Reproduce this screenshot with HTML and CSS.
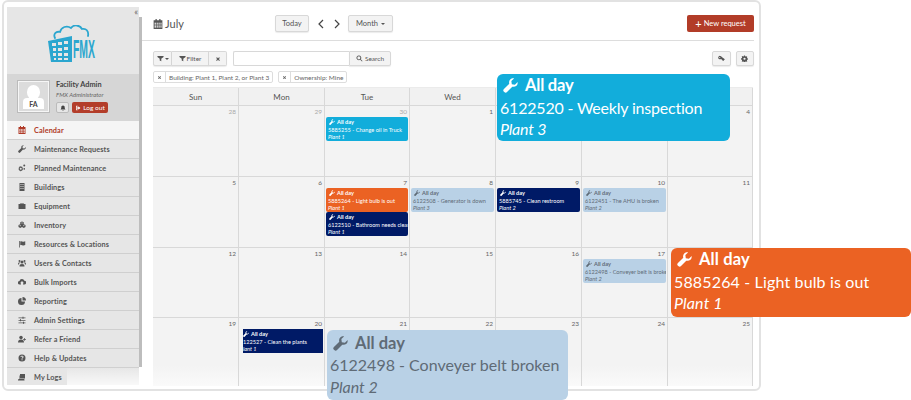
FILE: index.html
```html
<!DOCTYPE html>
<html lang="en">
<head>
<meta charset="utf-8">
<title>Calendar</title>
<link rel="stylesheet" href="styles.css">
</head>
<body>
<svg class="defs" width="0" height="0" aria-hidden="true">
  <symbol id="wrench" viewBox="0 0 16 16"><path d="M15.600 4.200c.2 1.500-.2 3-1.300 4-1.200 1.200-2.900 1.500-4.400 1L4.300 15a2 2 0 0 1-2.900 0l-.4-.4a2 2 0 0 1 0-2.900l5.700-5.600c-.5-1.500-.2-3.200 1-4.400C8.800.6 10.300.2 11.800.4L8.900 3.300l.5 3.300 3.300.5z" fill="currentColor"/></symbol>
  <symbol id="cal" viewBox="0 0 16 16"><path d="M4 0h2v2h4V0h2v2h3v14H1V2h3zM2.500 6v1.700h2.300V6zm3.300 0v1.700h2V6zm3 0v1.700h2V6zm3 0v1.700h2V6zm-9.300 2.700v1.800h2.300V8.700zm3.300 0v1.800h2V8.700zm3 0v1.800h2V8.700zm3 0v1.800h2V8.700zm-9.300 2.800v2h2.300v-2zm3.300 0v2h2v-2zm3 0v2h2v-2zm3 0v2h2v-2z" fill="currentColor" fill-rule="evenodd"/></symbol>
  <symbol id="gears" viewBox="0 0 16 16"><path d="M5.500 4l1 1.500 1.700-.3.500 1.800 1.300.8-.8 1.600.8 1.600-1.300.8-.5 1.800-1.700-.3-1 1.500-1-1.500-1.700.3-.5-1.800L1 11l.8-1.600L1 7.800l1.300-.8.500-1.800 1.700.3zm0 3.500a2 2 0 1 0 0 4 2 2 0 0 0 0-4zM12.500 1a2 2 0 1 1 0 4 2 2 0 0 1 0-4zm0 7a1.700 1.700 0 1 1 0 3.400 1.700 1.700 0 0 1 0-3.400z" fill="currentColor" fill-rule="evenodd"/></symbol>
  <symbol id="building" viewBox="0 0 16 16"><path d="M3 0h10v16H3zm2 2v2h2V2zm4 0v2h2V2zM5 6v2h2V6zm4 0v2h2V6zm-4 4v2h2v-2zm4 0v2h2v-2z" fill="currentColor" fill-rule="evenodd"/></symbol>
  <symbol id="brief" viewBox="0 0 16 16"><path d="M5 2h6v2h4v10H1V4h4zm1.300 1.200V4h3.400v-.8z" fill="currentColor" fill-rule="evenodd"/></symbol>
  <symbol id="cubes" viewBox="0 0 16 16"><path d="M8 1l3.500 1.700v3.600L15 8v4l-3.500 2L8 12.200 4.500 14 1 12V8l3.500-1.700V2.700zM8 3L6 4l2 1 2-1zM4.500 8.700l-2 1 2 1 2-1zm7 0l-2 1 2 1 2-1z" fill="currentColor" fill-rule="evenodd"/></symbol>
  <symbol id="flag" viewBox="0 0 16 16"><path d="M2 2h1.500v13H2zM4.500 3c2-1 3.500 0 5.500.300 1.500.2 3 0 4.500-.8v7.500c-1.500.8-3 1-4.500.8-2-.3-3.500-1.300-5.500-.3z" fill="currentColor"/></symbol>
  <symbol id="users" viewBox="0 0 16 16"><circle cx="8" cy="6" r="3" fill="currentColor"/><circle cx="3" cy="4" r="2" fill="currentColor"/><circle cx="13" cy="4" r="2" fill="currentColor"/><path d="M3 15c0-3.500 1.500-5 5-5s5 1.500 5 5zM0 11c0-3 1-4.500 3-4.500l1 1c-1 .7-2 2-2 3.500zm16 0c0-3-1-4.500-3-4.500l-1 1c1 .7 2 2 2 3.500z" fill="currentColor"/></symbol>
  <symbol id="cloudup" viewBox="0 0 16 16"><path d="M3.500 13A3.500 3.500 0 0 1 3 6a5 5 0 0 1 9.700-.6A3.800 3.800 0 0 1 12.500 13H10v-2.500h2L8 6l-4 4.500h2V13z" fill="currentColor"/></symbol>
  <symbol id="pie" viewBox="0 0 16 16"><path d="M7 2v7h7a7 7 0 1 1-7-7zM9 0a7 7 0 0 1 7 7H9z" fill="currentColor"/></symbol>
  <symbol id="sliders" viewBox="0 0 16 16"><path d="M1 3h14v1.300H1zm0 5h14v1.300H1zm0 5h14v1.300H1z" fill="currentColor"/><path d="M9 1.500h2v4H9zM4 6.500h2v4H4zM10 11.500h2v4h-2z" fill="currentColor"/></symbol>
  <symbol id="useradd" viewBox="0 0 16 16"><circle cx="6" cy="5" r="3.500" fill="currentColor"/><path d="M0 15c0-4 2-6 6-6s6 2 6 6zM12 6h1.500v2H16v1.500h-2.500v2H12v-2h-2V8h2z" fill="currentColor"/></symbol>
  <symbol id="help" viewBox="0 0 16 16"><path d="M8 1a7 7 0 1 1 0 14A7 7 0 0 1 8 1zm-.9 9.500v2h2v-2zM8 3.500c-1.700 0-3 1-3.100 2.700h1.900c.1-.7.500-1 1.200-1 .6 0 1 .3 1 .9 0 .5-.3.800-.9 1.200-.8.600-1 1.200-1 2.200h1.900c0-.6.100-.9.800-1.300.8-.6 1.300-1.200 1.300-2.200C11.100 4.500 9.800 3.500 8 3.500z" fill="currentColor" fill-rule="evenodd"/></symbol>
  <symbol id="logs" viewBox="0 0 16 16"><path d="M4 2h10v9H4zM2 5h1v7h9v1H2zM0 12.500h13V15H0z" fill="currentColor"/></symbol>
  <symbol id="bell" viewBox="0 0 16 16"><path d="M8 1c3 0 4.500 2 4.500 5 0 3 .8 4.500 2 6H1.500c1.200-1.500 2-3 2-6 0-3 1.500-5 4.500-5zM6.200 13h3.600a1.800 1.800 0 0 1-3.600 0z" fill="currentColor"/></symbol>
  <symbol id="logout" viewBox="0 0 16 16"><path d="M7 2H3v12h4v-2H5V4h2zM9 3.500L14.500 8 9 12.500V10H6V6h3z" fill="currentColor"/></symbol>
  <symbol id="funnel" viewBox="0 0 16 16"><path d="M1 2h14v2.300L9.800 8.500V14l-3.600-1.500v-4L1 4.300z" fill="currentColor"/></symbol>
  <symbol id="close" viewBox="0 0 16 16"><path d="M3 5l2-2 3 3 3-3 2 2-3 3 3 3-2 2-3-3-3 3-2-2 3-3z" fill="currentColor"/></symbol>
  <symbol id="search" viewBox="0 0 16 16"><path d="M6.500 1a5.500 5.500 0 0 1 4.400 8.800l4 4-1.200 1.200-4-4A5.500 5.500 0 1 1 6.500 1zm0 2a3.500 3.500 0 1 0 0 7 3.500 3.500 0 0 0 0-7z" fill="currentColor" fill-rule="evenodd"/></symbol>
  <symbol id="key" viewBox="0 0 16 16"><path d="M5 2a4 4 0 0 1 3.600 2.300L15 9v2.500h-1.500v1.500h-2.500l-3.800-4A4 4 0 1 1 5 2zM4 4.500a1.300 1.300 0 1 0 0 2.600 1.300 1.300 0 0 0 0-2.600z" fill="currentColor" fill-rule="evenodd"/></symbol>
  <symbol id="gear" viewBox="0 0 16 16"><path d="M6.800 1h2.400l.4 2 1.500.7 1.800-1.100 1.600 1.700-1.100 1.700.6 1.600 2 .4v2.400l-2 .4-.6 1.500 1.100 1.800-1.600 1.600-1.800-1.100-1.500.6-.4 2H6.800l-.4-2-1.500-.6-1.800 1.100-1.600-1.600 1.100-1.800-.7-1.500-1.900-.4V7.600l2-.4.6-1.600-1.100-1.700 1.600-1.700 1.800 1.100 1.500-.7zM8 6a2.500 2.500 0 1 0 0 5 2.500 2.500 0 0 0 0-5z" fill="currentColor" fill-rule="evenodd"/></symbol>
  <symbol id="left" viewBox="0 0 8 10"><path d="M6 1L2 5l4 4" fill="none" stroke="currentColor" stroke-width="1.200"/></symbol>
  <symbol id="right" viewBox="0 0 8 10"><path d="M2 1l4 4-4 4" fill="none" stroke="currentColor" stroke-width="1.200"/></symbol>
</svg>

<div class="frame">
  <aside class="sidebar">
    <span class="collapse">«</span>
    <div class="logo">
      <svg class="logo-mark" width="48" height="38" viewBox="0 0 48 38">
        <path d="M7 13c-2-4 1-7 5-6 1-5 7-7 11-4 3-4 9-3 11 1 4-1 7 2 6 7" fill="none" stroke="#2ba6cf" stroke-width="1.800" stroke-linecap="round"/>
        <path d="M0 16l24-5v26H3z" fill="#2ba6cf"/>
        <path d="M4 18h4v3H4zm6-1h4v3h-4zm6-1h4v3h-4zM5 23h3v3H5zm5 0h4v3h-4zm6-1h4v3h-4zM5 28h3v3H5zm5 0h4v3h-4zm6 0h4v3h-4zM6 33h2v2H6zm4 0h4v2h-4zm6 0h4v2h-4z" fill="#e6e6e6"/>
        <text class="logo-text" x="25" y="33" textLength="22" lengthAdjust="spacingAndGlyphs">FMX</text>
      </svg>
    </div>
    <div class="user">
      <div class="avatar">
        <span class="avatar-head"></span>
        <span class="avatar-body">FA</span>
      </div>
      <div class="user-info">
        <div class="user-name">Facility Admin</div>
        <div class="user-role">FMX Administrator</div>
        <div class="user-actions">
          <span class="mini-btn"><svg class="ic6"><use href="#bell"/></svg></span>
          <span class="logout"><svg class="ic6"><use href="#logout"/></svg>Log out</span>
        </div>
      </div>
    </div>
    <nav class="nav">
      <a class="nav-item active"><svg class="nav-ic"><use href="#cal"/></svg>Calendar</a>
      <a class="nav-item"><svg class="nav-ic"><use href="#wrench"/></svg>Maintenance Requests</a>
      <a class="nav-item"><svg class="nav-ic"><use href="#gears"/></svg>Planned Maintenance</a>
      <a class="nav-item"><svg class="nav-ic"><use href="#building"/></svg>Buildings</a>
      <a class="nav-item"><svg class="nav-ic"><use href="#brief"/></svg>Equipment</a>
      <a class="nav-item"><svg class="nav-ic"><use href="#cubes"/></svg>Inventory</a>
      <a class="nav-item"><svg class="nav-ic"><use href="#flag"/></svg>Resources &amp; Locations</a>
      <a class="nav-item"><svg class="nav-ic"><use href="#users"/></svg>Users &amp; Contacts</a>
      <a class="nav-item"><svg class="nav-ic"><use href="#cloudup"/></svg>Bulk Imports</a>
      <a class="nav-item"><svg class="nav-ic"><use href="#pie"/></svg>Reporting</a>
      <a class="nav-item"><svg class="nav-ic"><use href="#sliders"/></svg>Admin Settings</a>
      <a class="nav-item"><svg class="nav-ic"><use href="#useradd"/></svg>Refer a Friend</a>
      <a class="nav-item"><svg class="nav-ic"><use href="#help"/></svg>Help &amp; Updates</a>
      <a class="nav-item"><svg class="nav-ic"><use href="#logs"/></svg>My Logs</a>
    </nav>
  </aside>
  <div class="scrollbar"></div>
  <main class="main">
    <header class="topbar">
      <h1 class="title"><svg class="title-ic"><use href="#cal"/></svg>July</h1>
      <div class="nav-controls">
        <span class="btn today">Today</span>
        <span class="chev prev"><svg class="chev-ic"><use href="#left"/></svg></span>
        <span class="chev next"><svg class="chev-ic"><use href="#right"/></svg></span>
        <span class="btn month">Month <i class="caret"></i></span>
      </div>
      <span class="btn-new"><span class="plus">+</span> New request</span>
    </header>
    <div class="filters">
      <div class="btn-group">
        <span class="btn small grp-first"><svg class="ic7"><use href="#funnel"/></svg><i class="caret tiny"></i></span>
        <span class="btn small grp-mid"><svg class="ic7"><use href="#funnel"/></svg>Filter</span>
        <span class="btn small grp-last"><svg class="ic6"><use href="#close"/></svg></span>
      </div>
      <div class="search">
        <span class="search-input"></span>
        <span class="btn small search-btn"><svg class="ic7"><use href="#search"/></svg>Search</span>
      </div>
      <div class="tools">
        <span class="btn small tool"><svg class="ic7"><use href="#key"/></svg></span>
        <span class="btn small tool"><svg class="ic7"><use href="#gear"/></svg></span>
      </div>
    </div>
    <div class="chips">
      <span class="chip"><svg class="ic5"><use href="#close"/></svg><b class="chip-sep"></b>Building: Plant 1, Plant 2, or Plant 3</span>
      <span class="chip"><svg class="ic5"><use href="#close"/></svg><b class="chip-sep"></b>Ownership: Mine</span>
    </div>
    <section class="calendar">
      <div class="dow">Sun</div><div class="dow">Mon</div><div class="dow">Tue</div><div class="dow">Wed</div><div class="dow">Thu</div><div class="dow">Fri</div><div class="dow">Sat</div>

      <div class="cell"><span class="num other">28</span></div>
      <div class="cell"><span class="num other">29</span></div>
      <div class="cell"><span class="num other">30</span>
        <div class="event cyan"><div class="ev-head"><svg class="ic6"><use href="#wrench"/></svg>All day</div><div class="ev-line">5885255 - Change oil in Truck</div><div class="ev-loc">Plant 1</div></div>
      </div>
      <div class="cell"><span class="num">1</span></div>
      <div class="cell"></div>
      <div class="cell"></div>
      <div class="cell"><span class="num">4</span></div>

      <div class="cell"><span class="num">5</span></div>
      <div class="cell"><span class="num">6</span></div>
      <div class="cell"><span class="num">7</span>
        <div class="event orange"><div class="ev-head"><svg class="ic6"><use href="#wrench"/></svg>All day</div><div class="ev-line">5885264 - Light bulb is out</div><div class="ev-loc">Plant 1</div></div>
        <div class="event navy"><div class="ev-head"><svg class="ic6"><use href="#wrench"/></svg>All day</div><div class="ev-line">6122510 - Bathroom needs clear</div><div class="ev-loc">Plant 1</div></div>
      </div>
      <div class="cell"><span class="num">8</span>
        <div class="event pale"><div class="ev-head"><svg class="ic6"><use href="#wrench"/></svg>All day</div><div class="ev-line">6122508 - Generator is down</div><div class="ev-loc">Plant 3</div></div>
      </div>
      <div class="cell"><span class="num">9</span>
        <div class="event navy"><div class="ev-head"><svg class="ic6"><use href="#wrench"/></svg>All day</div><div class="ev-line">5885745 - Clean restroom</div><div class="ev-loc">Plant 2</div></div>
      </div>
      <div class="cell"><span class="num">10</span>
        <div class="event pale"><div class="ev-head"><svg class="ic6"><use href="#wrench"/></svg>All day</div><div class="ev-line">6122451 - The AHU is broken</div><div class="ev-loc">Plant 2</div></div>
      </div>
      <div class="cell"><span class="num">11</span></div>

      <div class="cell"><span class="num">12</span></div>
      <div class="cell"><span class="num">13</span></div>
      <div class="cell"><span class="num">14</span></div>
      <div class="cell"><span class="num">15</span></div>
      <div class="cell"><span class="num">16</span></div>
      <div class="cell"><span class="num">17</span>
        <div class="event pale"><div class="ev-head"><svg class="ic6"><use href="#wrench"/></svg>All day</div><div class="ev-line">6122498 - Conveyer belt is broke</div><div class="ev-loc">Plant 2</div></div>
      </div>
      <div class="cell"></div>

      <div class="cell final"><span class="num">19</span></div>
      <div class="cell final"><span class="num">20</span>
        <div class="event navy clipped"><div class="ev-head"><svg class="ic6"><use href="#wrench"/></svg>All day</div><div class="ev-line">122527 - Clean the plants</div><div class="ev-loc">lant 1</div></div>
      </div>
      <div class="cell final"><span class="num">21</span></div>
      <div class="cell final"><span class="num">22</span></div>
      <div class="cell final"><span class="num">23</span></div>
      <div class="cell final"><span class="num">24</span></div>
      <div class="cell final"><span class="num">25</span></div>
    </section>
  </main>
</div>

<div class="callout call-cyan">
  <div class="call-head"><svg class="call-ic"><use href="#wrench"/></svg>All day</div>
  <div>6122520 - Weekly inspection</div>
  <div class="call-loc">Plant 3</div>
</div>
<div class="callout call-orange">
  <div class="call-head"><svg class="call-ic"><use href="#wrench"/></svg>All day</div>
  <div>5885264 - Light bulb is out</div>
  <div class="call-loc">Plant 1</div>
</div>
<div class="callout call-pale">
  <div class="call-head"><svg class="call-ic"><use href="#wrench"/></svg>All day</div>
  <div>6122498 - Conveyer belt broken</div>
  <div class="call-loc">Plant 2</div>
</div>
</body>
</html>
```

FILE: styles.css
```css
* { box-sizing: border-box; }
html, body { margin: 0; height: 400px; overflow: hidden; background: #fff; }
body { position: relative; width: 911px; font-family: "Lato", "Noto Sans", sans-serif; color: #444; }
.defs { position: absolute; }
svg { display: inline-block; flex: none; }
.ic5 { width: 5px; height: 5px; }
.ic6 { width: 6px; height: 6px; }
.ic7 { width: 7px; height: 7px; }

.frame { display: flex; width: 759px; height: 391px; margin-left: 2px; padding: 5px 5px 4px 3px; border: 2px solid #e2e2e2; border-radius: 6px; background: #fff; overflow: hidden; }

/* Sidebar */
.sidebar { position: relative; width: 132px; flex: none; display: flex; flex-direction: column; background: #e6e6e6; overflow: hidden; }
.sidebar::after { content: ""; position: absolute; left: 60px; right: 0; bottom: 0; height: 18px; background: linear-gradient(to bottom, rgba(255,255,255,0), rgba(255,255,255,.75)); }
.collapse { position: absolute; top: 0; right: 1px; font-size: 9px; line-height: 9px; color: #666; }
.scrollbar { width: 3px; flex: none; height: 350px; margin-top: 10px; background: #bdbdbd; }
.logo { height: 67px; flex: none; display: flex; justify-content: center; padding: 18px 3px 0 0; }
.logo-text { font-family: "Liberation Sans", sans-serif; font-weight: 700; font-size: 26px; fill: #2ba6cf; }
.user { height: 47px; flex: none; display: flex; gap: 6px; padding: 6px 0 0 10px; background: #d6d6d6; }
.avatar { width: 33px; height: 33px; border: 2px solid #f6f6f6; background: #dcdcdc; display: flex; flex-direction: column; align-items: center; outline: 1px solid #bbb; outline-offset: -1px; }
.avatar-head { width: 13px; height: 14px; margin-top: 3px; border-radius: 50% 50% 45% 45%; background: #fff; }
.avatar-body { width: 21px; height: 11px; margin-top: -1px; border-radius: 4px 4px 0 0; background: #fff; font-size: 7px; font-weight: 700; line-height: 12px; text-align: center; color: #444; }
.user-info { display: flex; flex-direction: column; }
.user-name { font-size: 7.300px; line-height: 10px; font-weight: 700; color: #444; white-space: nowrap; }
.user-role { font-size: 6px; line-height: 8px; font-style: italic; color: #666; white-space: nowrap; margin-top: 1px; }
.user-actions { display: flex; gap: 3px; margin-top: 3px; }
.mini-btn { width: 13px; height: 11px; display: flex; align-items: center; justify-content: center; background: #e6e6e6; border: 1px solid #bbb; border-radius: 2px; color: #444; }
.logout { height: 11px; width: 36px; display: flex; align-items: center; justify-content: center; gap: 2px; background: #b33d2a; border-radius: 2px; color: #fff; font-size: 6.500px; }
.nav { display: flex; flex-direction: column; }
.nav-item { height: 19px; flex: none; display: flex; align-items: center; padding-left: 11px; border-bottom: 1px solid #cfcfcf; font-size: 7.300px; font-weight: 700; letter-spacing: .1px; color: #555; white-space: nowrap; }
.nav-ic { width: 8px; height: 8px; margin-right: 8px; color: #555; }
.nav-item.active { background: #f5f5f5; color: #b03a27; }
.nav-item.active .nav-ic { color: #b03a27; }

/* Main */
.main { flex: 1; min-width: 0; display: flex; flex-direction: column; }
.topbar { height: 34px; flex: none; padding: 8px 0 0 11px; display: flex; align-items: flex-start; border-bottom: 1px solid #ddd; }
.title { width: 122px; margin: 0; display: flex; align-items: center; gap: 2px; height: 17px; font-size: 11px; font-weight: 400; color: #555; }
.title-ic { width: 10px; height: 10px; color: #555; }
.nav-controls { display: flex; align-items: center; }
.btn { display: flex; align-items: center; justify-content: center; height: 17px; background: #f3f3f3; border: 1px solid #d8d8d8; border-radius: 2px; box-shadow: 0 1px 1px rgba(0,0,0,.08); font-size: 7.500px; color: #555; white-space: nowrap; }
.today { width: 34px; }
.chev { width: 16px; height: 17px; display: flex; align-items: center; justify-content: center; color: #444; }
.chev-ic { width: 8px; height: 10px; }
.prev { margin-left: 4px; }
.next { margin-right: 3px; }
.month { width: 45px; gap: 3px; }
.caret { display: inline-block; width: 0; height: 0; border: 2.500px solid transparent; border-top-color: #555; border-bottom: 0; }
.caret.tiny { border-width: 2px; border-bottom: 0; }
.btn-new { margin-left: auto; width: 67px; height: 17px; display: flex; align-items: center; justify-content: center; gap: 2px; background: #b23c28; border-radius: 2px; color: #fff; font-size: 7.500px; white-space: nowrap; }
.plus { font-size: 11px; line-height: 11px; }

.filters { display: flex; align-items: flex-start; height: 15px; margin: 10px 0 0 11px; flex: none; }
.btn-group { display: flex; }
.small { height: 15px; font-size: 6.500px; gap: 1px; border-radius: 0; }
.grp-first { width: 19px; border-radius: 2px 0 0 2px; }
.grp-mid { width: 37px; border-left: 0; }
.grp-last { width: 18px; border-left: 0; border-radius: 0 2px 2px 0; }
.search { display: flex; margin-left: 6px; }
.search-input { width: 116px; height: 15px; background: #fff; border: 1px solid #d8d8d8; border-right: 0; border-radius: 2px 0 0 2px; }
.search-btn { width: 42px; gap: 2px; border-radius: 0 2px 2px 0; }
.tools { display: flex; gap: 5px; margin-left: auto; }
.tool { width: 18.500px; border-radius: 2px; }
.chips { display: flex; gap: 5px; margin: 5px 0 0 11px; height: 12px; flex: none; }
.chip { display: flex; align-items: center; gap: 2px; height: 12px; padding: 0 3px; background: #fff; border: 1px solid #ddd; border-radius: 2px; font-size: 6.500px; color: #666; white-space: nowrap; }
.chip-sep { width: 1px; height: 10px; background: #ddd; margin: 0 1px; }

.calendar { display: grid; grid-template-columns: 86px 86px 85px 86px 86px 86px 85px; grid-template-rows: 18px 71px 71px 70px 68px; margin: 4px 0 0 11px; width: 600px; flex: none; background: #f3f3f3; border-top: 1px solid #ebebeb; }
.dow { display: flex; align-items: center; justify-content: center; background: #f1f1f1; border-right: 1px solid #d8d8d8; border-bottom: 1px solid #d8d8d8; font-size: 8px; color: #555; }
.cell { min-width: 0; padding: 1px 1px 0; border-right: 1px solid #d8d8d8; border-bottom: 1px solid #d8d8d8; overflow: hidden; display: flex; flex-direction: column; align-items: stretch; }
.cell.final { border-bottom: 0; background: linear-gradient(to bottom, #f3f3f3 70%, #fafafa); }
.num { height: 10px; flex: none; font-size: 6.500px; line-height: 10px; text-align: right; color: #666; padding-right: 1px; }
.num.other { color: #aaa; }
.event { height: 24px; flex: none; padding: 1px 0 0 2px; border-radius: 2px; overflow: hidden; font-size: 5.600px; line-height: 7.500px; white-space: nowrap; }
.ev-head { display: flex; align-items: center; gap: 2px; padding-left: 1px; font-weight: 700; }
.ev-loc { font-style: italic; }
.cyan { background: #12addb; color: #fff; }
.orange { background: #eb6223; color: #fff; }
.navy { background: #001a66; color: #fff; }
.pale { background: #b9d1e6; color: #5f6b76; }
.clipped { margin-left: 3px; margin-right: 0; border-radius: 0; padding-left: 0; }
.clipped .ev-head { padding-left: 0; }

/* Enlarged callouts over the calendar */
.callout { position: absolute; padding: 1px 0 0 3px; border-radius: 6px; font-size: 16px; line-height: 21.500px; white-space: nowrap; }
.call-head { display: flex; align-items: center; gap: 7px; padding-left: 3px; font-size: 16.500px; font-weight: 700; }
.call-ic { width: 15px; height: 15px; }
.call-loc { font-style: italic; }
.call-cyan { left: 497px; top: 74px; width: 233px; height: 67px; background: #12addb; color: #fff; letter-spacing: -.2px; }
.call-orange { left: 671px; top: 248px; width: 240px; height: 69px; background: #eb6223; color: #fff; letter-spacing: .15px; }
.call-pale { left: 327px; top: 330px; width: 241px; height: 70px; background: #b9d1e6; color: #5f6b76; padding-top: 2px; line-height: 22px; }
```
